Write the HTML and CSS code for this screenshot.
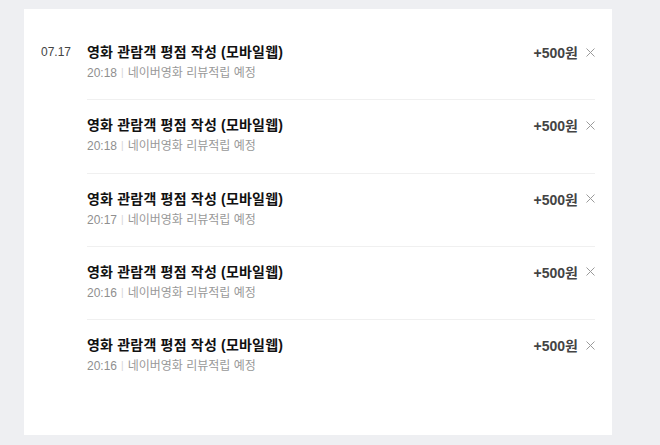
FILE: index.html
```html
<!DOCTYPE html>
<html lang="ko">
<head>
<meta charset="utf-8">
<title>적립 내역</title>
<link rel="stylesheet" href="styles.css">
</head>
<body>
<div class="page">
  <section class="card">
    <div class="row">
      <div class="date">07.17</div>
      <div class="body">
        <div class="info">
          <div class="title">영화 관람객 평점 작성 (모바일웹)</div>
          <div class="sub"><span class="time">20:18</span><span class="bar">|</span><span class="desc">네이버영화 리뷰적립 예정</span></div>
        </div>
        <div class="side">
          <span class="amount">+500원</span>
          <button class="del" aria-label="삭제"><svg width="9" height="9" viewBox="0 0 9 9"><path d="M0.5 0.5L8.5 8.5M8.5 0.5L0.5 8.5" stroke="#9a9a9a" stroke-width="1" fill="none"/></svg></button>
        </div>
      </div>
    </div>
    <div class="row">
      <div class="date"></div>
      <div class="body">
        <div class="info">
          <div class="title">영화 관람객 평점 작성 (모바일웹)</div>
          <div class="sub"><span class="time">20:18</span><span class="bar">|</span><span class="desc">네이버영화 리뷰적립 예정</span></div>
        </div>
        <div class="side">
          <span class="amount">+500원</span>
          <button class="del" aria-label="삭제"><svg width="9" height="9" viewBox="0 0 9 9"><path d="M0.5 0.5L8.5 8.5M8.5 0.5L0.5 8.5" stroke="#9a9a9a" stroke-width="1" fill="none"/></svg></button>
        </div>
      </div>
    </div>
    <div class="row">
      <div class="date"></div>
      <div class="body">
        <div class="info">
          <div class="title">영화 관람객 평점 작성 (모바일웹)</div>
          <div class="sub"><span class="time">20:17</span><span class="bar">|</span><span class="desc">네이버영화 리뷰적립 예정</span></div>
        </div>
        <div class="side">
          <span class="amount">+500원</span>
          <button class="del" aria-label="삭제"><svg width="9" height="9" viewBox="0 0 9 9"><path d="M0.5 0.5L8.5 8.5M8.5 0.5L0.5 8.5" stroke="#9a9a9a" stroke-width="1" fill="none"/></svg></button>
        </div>
      </div>
    </div>
    <div class="row">
      <div class="date"></div>
      <div class="body">
        <div class="info">
          <div class="title">영화 관람객 평점 작성 (모바일웹)</div>
          <div class="sub"><span class="time">20:16</span><span class="bar">|</span><span class="desc">네이버영화 리뷰적립 예정</span></div>
        </div>
        <div class="side">
          <span class="amount">+500원</span>
          <button class="del" aria-label="삭제"><svg width="9" height="9" viewBox="0 0 9 9"><path d="M0.5 0.5L8.5 8.5M8.5 0.5L0.5 8.5" stroke="#9a9a9a" stroke-width="1" fill="none"/></svg></button>
        </div>
      </div>
    </div>
    <div class="row">
      <div class="date"></div>
      <div class="body">
        <div class="info">
          <div class="title">영화 관람객 평점 작성 (모바일웹)</div>
          <div class="sub"><span class="time">20:16</span><span class="bar">|</span><span class="desc">네이버영화 리뷰적립 예정</span></div>
        </div>
        <div class="side">
          <span class="amount">+500원</span>
          <button class="del" aria-label="삭제"><svg width="9" height="9" viewBox="0 0 9 9"><path d="M0.5 0.5L8.5 8.5M8.5 0.5L0.5 8.5" stroke="#9a9a9a" stroke-width="1" fill="none"/></svg></button>
        </div>
      </div>
    </div>
  </section>
</div>
</body>
</html>
```

FILE: styles.css
```css
* { box-sizing: border-box; }
html, body { margin: 0; padding: 0; }
body {
  background: #eeeff2;
  font-family: "Liberation Sans", "Noto Sans CJK KR", sans-serif;
  color: #000;
  width: 660px;
  height: 445px;
  overflow: hidden;
}
.page {
  padding: 9px 48px 0 24px;
}
.card {
  background: #fff;
  height: 426px;
  padding: 18px 17px 0 17px;
}
.row {
  display: flex;
}
.date {
  width: 46px;
  flex: none;
  font-size: 12px;
  line-height: 20px;
  height: 20px;
  margin-top: 15px;
  color: #444;
}
.body {
  flex: 1;
  display: flex;
  justify-content: space-between;
  padding: 15px 0 17.25px;
  border-bottom: 1px solid #f0f0f0;
}
.row:last-child .body { border-bottom: none; }
.title {
  font-size: 14px;
  font-weight: bold;
  line-height: 20px;
  height: 20px;
  letter-spacing: 0.2px;
  color: #111;
}
.sub {
  margin-top: 2px;
  font-size: 12px;
  line-height: 18px;
  height: 18px;
  color: #999;
}
.time { color: #8f8f8f; }
.bar {
  color: #d5d5d5;
  font-size: 10px;
  margin: 0 4px;
  position: relative;
  top: -1px;
}
.side {
  display: flex;
  align-items: center;
  height: 20px;
  gap: 8px;
}
.amount {
  font-size: 14px;
  font-weight: bold;
  color: #444;
}
.del {
  border: none;
  background: none;
  padding: 0;
  width: 9px;
  height: 9px;
  display: flex;
  cursor: pointer;
}
```
